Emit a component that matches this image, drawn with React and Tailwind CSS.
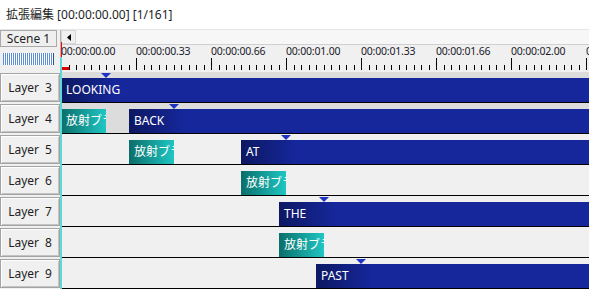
const LAYERS = [
  { name: "Layer 3", bg: "bg-[#dcdcdc]", clips: [{ type: "text", left: 0, label: "LOOKING" }] },
  {
    name: "Layer 4",
    bg: "bg-[#dcdcdc]",
    clips: [
      { type: "fx", left: 0, label: "放射ブラー" },
      { type: "text", left: 68, label: "BACK" },
    ],
  },
  {
    name: "Layer 5",
    bg: "bg-[#f0f0f0]",
    clips: [
      { type: "fx", left: 68, label: "放射ブラー" },
      { type: "text", left: 180, label: "AT" },
    ],
  },
  { name: "Layer 6", bg: "bg-[#f0f0f0]", clips: [{ type: "fx", left: 180, label: "放射ブラー" }] },
  { name: "Layer 7", bg: "bg-[#f0f0f0]", clips: [{ type: "text", left: 218, label: "THE" }] },
  { name: "Layer 8", bg: "bg-[#f0f0f0]", clips: [{ type: "fx", left: 218, label: "放射ブラー" }] },
  { name: "Layer 9", bg: "bg-[#f0f0f0]", clips: [{ type: "text", left: 255, label: "PAST" }] },
];

const LABELS = [
  "00:00:00.00",
  "00:00:00.33",
  "00:00:00.66",
  "00:00:01.00",
  "00:00:01.33",
  "00:00:01.66",
  "00:00:02.00",
  "00:00:02.33",
];

function Ruler() {
  const ticks = [];
  for (let i = 0; i <= 72; i++) {
    const x = Math.round(i * 7.5) + 0.5;
    const major = i % 10 === 0;
    ticks.push(
      <line key={i} x1={x} x2={x} y1={major ? 13 : 20} y2={25} stroke="#000" strokeWidth="1" />
    );
  }
  return (
    <div className="relative h-[27px]">
      <svg className="absolute left-0 top-0" width="540" height="27">
        {ticks}
      </svg>
      {/* time labels sit on the ruler at 75px per third of a second */}
      <div className="flex whitespace-nowrap">
        {LABELS.map((t) => (
          <span key={t} className="w-[75px] shrink-0 text-[10.5px] leading-[12px] tracking-[-0.2px] text-[#1a1a2a]">
            {t}
          </span>
        ))}
      </div>
    </div>
  );
}

function Clip({ clip }) {
  if (clip.type === "fx") {
    return (
      <div
        className="absolute top-[6px] bottom-0 w-[45px] overflow-hidden whitespace-nowrap flex items-center pl-[5px] text-[12px] text-white bg-[linear-gradient(to_right,#0b6e6a,#1fc6c3)]"
        style={{ left: clip.left }}
      >
        {clip.label}
      </div>
    );
  }
  return (
    <>
      <svg className="absolute top-[1px]" style={{ left: clip.left + 40 }} width="10" height="5">
        <polygon points="0,0 10,0 5,5" fill="#1c33c4" />
      </svg>
      <div
        className="absolute top-[6px] bottom-0 right-0 flex items-center pl-[5px] text-[12px] text-white bg-[linear-gradient(to_right,#0d1862,#15279a_55px)]"
        style={{ left: clip.left }}
      >
        {clip.label}
      </div>
    </>
  );
}

export default function App() {
  return (
    <div className="w-[589px] h-[289px] overflow-hidden bg-[#f0f0f0] font-['Noto_Sans','Noto_Sans_CJK_JP',sans-serif] text-[#1e1e1e]">
      {/* title */}
      <div className="h-[30px] bg-white border-b border-[#e6e6e6] flex items-center pl-[6px] text-[12px]">
        拡張編集 [00:00:00.00] [1/161]
      </div>

      <div className="flex">
        {/* layer headers */}
        <div className="w-[61px] shrink-0 border-r border-[#b4b4b4]">
          <div className="h-[42px]">
            <div className="h-[17px] w-[57px] border border-[#a9a9a9] bg-[#efefef] flex items-center justify-center text-[12px]">
              Scene 1
            </div>
            <div className="mt-[6px] ml-[3px] h-[12px] w-[51px] border-r border-[#2a4f9c] bg-[repeating-linear-gradient(to_right,#5a8ed8_0_1px,#ffffff_1px_2px)]" />
          </div>
          {LAYERS.map((l) => (
            <div key={l.name} className="h-[31px] pt-[1px]">
              <div className="h-[29px] border border-[#a3a3a3] shadow-[inset_1px_1px_0_#ffffff,inset_-1px_-1px_0_#c4c4c4] bg-[#f0f0f0] flex items-center justify-center gap-[6px] text-[12px]">
                <span>{l.name.split(" ")[0]}</span>
                <span>{l.name.split(" ")[1]}</span>
              </div>
            </div>
          ))}
        </div>

        {/* timeline */}
        <div className="flex-1 relative overflow-hidden">
          <div className="h-[15px] flex bg-[#f7f7f7] border-b border-[#d0d0d0]">
            <div className="w-[15px] h-full border border-[#d6d6d6] bg-[#f0f0f0] flex items-center justify-center">
              <svg width="4" height="7">
                <polygon points="4,0 4,7 0,3.5" fill="#000" />
              </svg>
            </div>
          </div>
          <Ruler />

          {LAYERS.map((l) => (
            <div key={l.name} className={`h-[31px] relative border-b border-black ${l.bg}`}>
              {l.clips.map((c, i) => (
                <Clip key={i} clip={c} />
              ))}
            </div>
          ))}

          {/* current position cursor */}
          <div className="absolute left-0 top-[12px] w-[1px] h-[15px] bg-[#ff0000]" />
          <div className="absolute left-0 top-[37px] w-[8px] h-[3px] bg-[#e00000]" />
          <div className="absolute left-0 top-[27px] bottom-0 w-[1px] bg-[#00ffff]" />
        </div>
      </div>
    </div>
  );
}
